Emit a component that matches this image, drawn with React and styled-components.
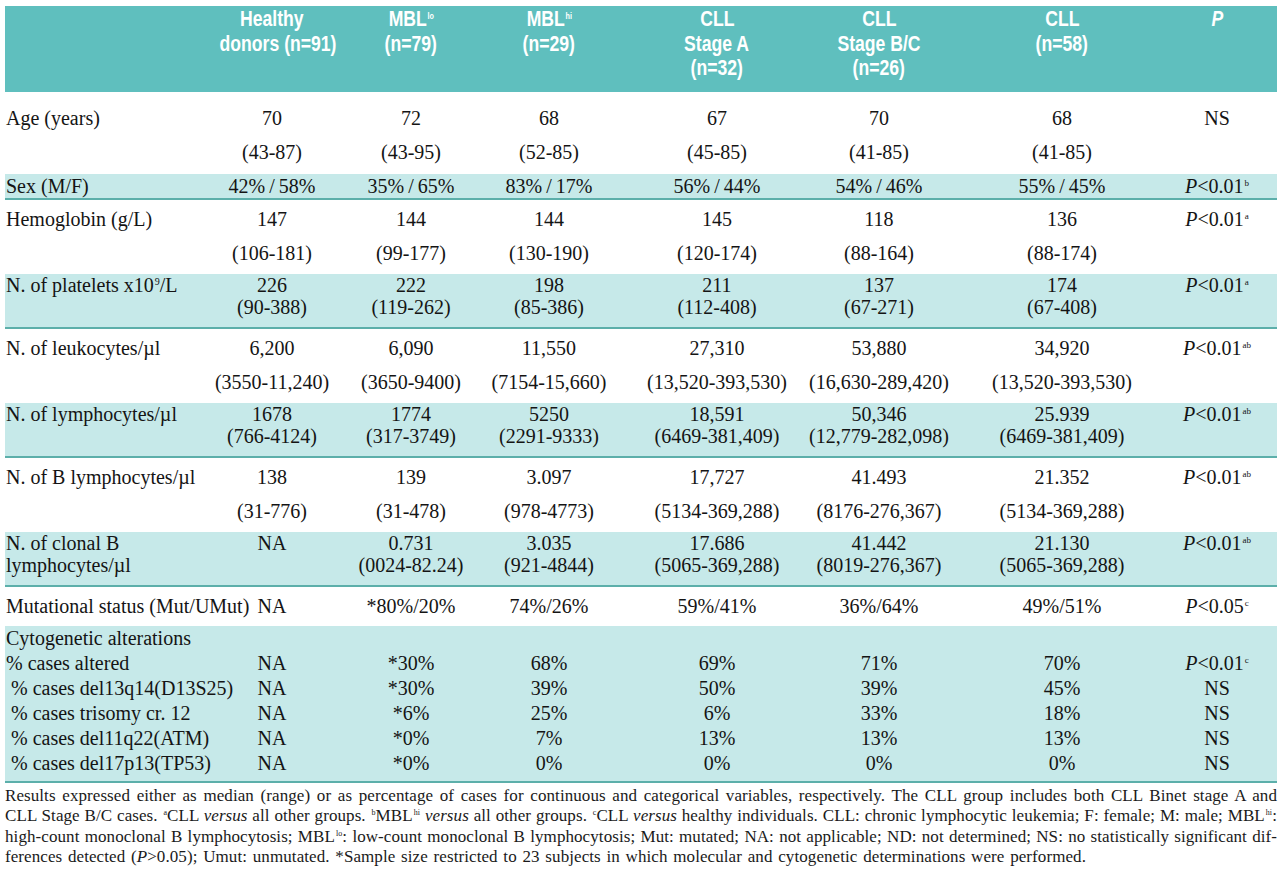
import React from "react";
import styled, { createGlobalStyle } from "styled-components";

const COLS = "200px 134px 144px 132px 204px 120px 246px 64px 28px";

const GlobalStyle = createGlobalStyle`
  body {
    margin: 0;
    background: #fff;
  }
`;

const Page = styled.div`
  width: 1272px;
  padding: 6px 3px 0 5px;
  color: #141414;
  font-family: "Liberation Serif", "Times New Roman", serif;
`;

const HeadRow = styled.div`
  display: grid;
  grid-template-columns: ${COLS};
  height: 86px;
  background: #5fbfbe;
  color: #fff;
  font-family: "Liberation Sans", Arial, sans-serif;
  font-weight: bold;
  font-size: 22px;
  line-height: 24.5px;
`;

const HeadCell = styled.div`
  padding-top: 1px;
  text-align: center;
  white-space: nowrap;
  font-style: ${(p) => (p.$italic ? "italic" : "normal")};
`;

// no condensed face is installed, so the header face is narrowed by hand
const HeadText = styled.span`
  display: inline-block;
  transform: scaleX(0.8);
  transform-origin: center;
`;

// spacing of each kind of body row
const kinds = {
  first: { lh: 34, pad: "9px 0 5px" },
  pair: { lh: 34, pad: "2px 0 4px" },
  shadedPair: { lh: 22, pad: "0 0 9px", shaded: true },
  shadedSingle: { lh: 24, pad: "0", shaded: true },
  single: { lh: 34, pad: "2px 0 3px" },
  block: { lh: 25, pad: "0 0 5px", shaded: true },
};

const Row = styled.div`
  display: grid;
  grid-template-columns: ${COLS};
  font-size: 20px;
  line-height: ${(p) => p.$lh}px;
  padding: ${(p) => p.$pad};
  background: ${(p) => (p.$shaded ? "#c6e9e9" : "#fff")};
  border-bottom: ${(p) => (p.$shaded ? "2px solid #5cafaa" : "none")};
`;

const Label = styled.div`
  padding-left: 1px;
  white-space: nowrap;
`;

const Cell = styled.div`
  display: flex;
  flex-direction: column;
  align-items: center;
  white-space: nowrap;
`;

const Sup = styled.sup`
  font-size: ${(p) => p.$size || 10}px;
  line-height: 0;
  vertical-align: 0.75em;
  margin-left: 1px;
`;

const Footnote = styled.div`
  margin-top: 3px;
  font-size: 17px;
  letter-spacing: 0.08px;
  line-height: 20.4px;
  color: #1a1a1a;
`;

const FootLine = styled.div`
  text-align: justify;
  text-align-last: ${(p) => (p.$last ? "left" : "justify")};
  word-spacing: ${(p) => (p.$last ? "1.4px" : "normal")};
`;

const Pv = ({ lvl = "0.01", sup }) => (
  <>
    <i>P</i>&lt;{lvl}
    <Sup $size={9}>{sup}</Sup>
  </>
);

const nb = "\u00a0";
const t = "\u2009";

const rows = [
  {
    kind: "first",
    label: ["Age (years)"],
    cells: [
      ["70", "(43-87)"],
      ["72", "(43-95)"],
      ["68", "(52-85)"],
      ["67", "(45-85)"],
      ["70", "(41-85)"],
      ["68", "(41-85)"],
    ],
    p: ["NS"],
  },
  {
    kind: "shadedSingle",
    label: ["Sex (M/F)"],
    cells: [
      [`42%${t}/${t}58%`],
      [`35%${t}/${t}65%`],
      [`83%${t}/${t}17%`],
      [`56%${t}/${t}44%`],
      [`54%${t}/${t}46%`],
      [`55%${t}/${t}45%`],
    ],
    p: [<Pv sup="b" />],
  },
  {
    kind: "pair",
    label: ["Hemoglobin (g/L)"],
    cells: [
      ["147", "(106-181)"],
      ["144", "(99-177)"],
      ["144", "(130-190)"],
      ["145", "(120-174)"],
      ["118", "(88-164)"],
      ["136", "(88-174)"],
    ],
    p: [<Pv sup="a" />],
  },
  {
    kind: "shadedPair",
    label: [
      <>
        N. of platelets x10<Sup>9</Sup>/L
      </>,
    ],
    cells: [
      ["226", "(90-388)"],
      ["222", "(119-262)"],
      ["198", "(85-386)"],
      ["211", "(112-408)"],
      ["137", "(67-271)"],
      ["174", "(67-408)"],
    ],
    p: [<Pv sup="a" />],
  },
  {
    kind: "pair",
    label: ["N. of leukocytes/\u00b5l"],
    cells: [
      ["6,200", "(3550-11,240)"],
      ["6,090", "(3650-9400)"],
      ["11,550", "(7154-15,660)"],
      ["27,310", "(13,520-393,530)"],
      ["53,880", "(16,630-289,420)"],
      ["34,920", "(13,520-393,530)"],
    ],
    p: [<Pv sup="ab" />],
  },
  {
    kind: "shadedPair",
    label: ["N. of lymphocytes/\u00b5l"],
    cells: [
      ["1678", "(766-4124)"],
      ["1774", "(317-3749)"],
      ["5250", "(2291-9333)"],
      ["18,591", "(6469-381,409)"],
      ["50,346", "(12,779-282,098)"],
      ["25.939", "(6469-381,409)"],
    ],
    p: [<Pv sup="ab" />],
  },
  {
    kind: "pair",
    label: ["N. of B lymphocytes/\u00b5l"],
    cells: [
      ["138", "(31-776)"],
      ["139", "(31-478)"],
      ["3.097", "(978-4773)"],
      ["17,727", "(5134-369,288)"],
      ["41.493", "(8176-276,367)"],
      ["21.352", "(5134-369,288)"],
    ],
    p: [<Pv sup="ab" />],
  },
  {
    kind: "shadedPair",
    label: ["N. of clonal B", "lymphocytes/\u00b5l"],
    cells: [
      ["NA"],
      ["0.731", "(0024-82.24)"],
      ["3.035", "(921-4844)"],
      ["17.686", "(5065-369,288)"],
      ["41.442", "(8019-276,367)"],
      ["21.130", "(5065-369,288)"],
    ],
    p: [<Pv sup="ab" />],
  },
  {
    kind: "single",
    label: ["Mutational status (Mut/UMut)"],
    cells: [["NA"], ["*80%/20%"], ["74%/26%"], ["59%/41%"], ["36%/64%"], ["49%/51%"]],
    p: [<Pv lvl="0.05" sup="c" />],
  },
  {
    kind: "block",
    label: [
      "Cytogenetic alterations",
      "% cases altered",
      `${nb}% cases del13q14(D13S25)`,
      `${nb}% cases trisomy cr. 12`,
      `${nb}% cases del11q22(ATM)`,
      `${nb}% cases del17p13(TP53)`,
    ],
    cells: [
      [nb, "NA", "NA", "NA", "NA", "NA"],
      [nb, "*30%", "*30%", "*6%", "*0%", "*0%"],
      [nb, "68%", "39%", "25%", "7%", "0%"],
      [nb, "69%", "50%", "6%", "13%", "0%"],
      [nb, "71%", "39%", "33%", "13%", "0%"],
      [nb, "70%", "45%", "18%", "13%", "0%"],
    ],
    p: [nb, <Pv sup="c" />, "NS", "NS", "NS", "NS"],
  },
];

const lines = (list) => list.map((v, i) => <div key={i}>{v}</div>);

const heads = [
  [<>Healthy</>, <>donors (n=91)</>],
  [<>MBL<Sup $size={9}>lo</Sup></>, <>(n=79)</>],
  [<>MBL<Sup $size={9}>hi</Sup></>, <>(n=29)</>],
  [<>CLL</>, <>Stage A</>, <>(n=32)</>],
  [<>CLL</>, <>Stage B/C</>, <>(n=26)</>],
  [<>CLL</>, <>(n=58)</>],
];

export default function App() {
  return (
    <Page>
      <GlobalStyle />
      <HeadRow>
        <div />
        {heads.map((h, i) => (
          <HeadCell key={i}>
            {h.map((l, j) => (
              <div key={j}>
                <HeadText>{l}</HeadText>
              </div>
            ))}
          </HeadCell>
        ))}
        <HeadCell $italic>
          <HeadText>P</HeadText>
        </HeadCell>
        <div />
      </HeadRow>

      {rows.map((row, i) => {
        const k = kinds[row.kind];
        return (
          <Row key={i} $lh={k.lh} $pad={k.pad} $shaded={k.shaded}>
            <Label>{lines(row.label)}</Label>
            {row.cells.map((c, j) => (
              <Cell key={j}>{lines(c)}</Cell>
            ))}
            <Cell>{lines(row.p)}</Cell>
            <div />
          </Row>
        );
      })}

      <Footnote>
        <FootLine>
          Results expressed either as median (range) or as percentage of cases for continuous and
          categorical variables, respectively. The CLL group includes both CLL Binet stage A and
        </FootLine>
        <FootLine>
          CLL Stage B/C cases. <Sup $size={8}>a</Sup>CLL <i>versus</i> all other groups.{" "}
          <Sup $size={8}>b</Sup>MBL<Sup $size={8}>hi</Sup> <i>versus</i> all other groups.{" "}
          <Sup $size={8}>c</Sup>CLL <i>versus</i> healthy individuals. CLL: chronic lymphocytic
          leukemia; F: female; M: male; MBL<Sup $size={8}>hi</Sup>:
        </FootLine>
        <FootLine>
          high-count monoclonal B lymphocytosis; MBL<Sup $size={8}>lo</Sup>: low-count monoclonal B
          lymphocytosis; Mut: mutated; NA: not applicable; ND: not determined; NS: no statistically
          significant dif-
        </FootLine>
        <FootLine $last>
          ferences detected (<i>P</i>&gt;0.05); Umut: unmutated. *Sample size restricted to 23
          subjects in which molecular and cytogenetic determinations were performed.
        </FootLine>
      </Footnote>
    </Page>
  );
}
